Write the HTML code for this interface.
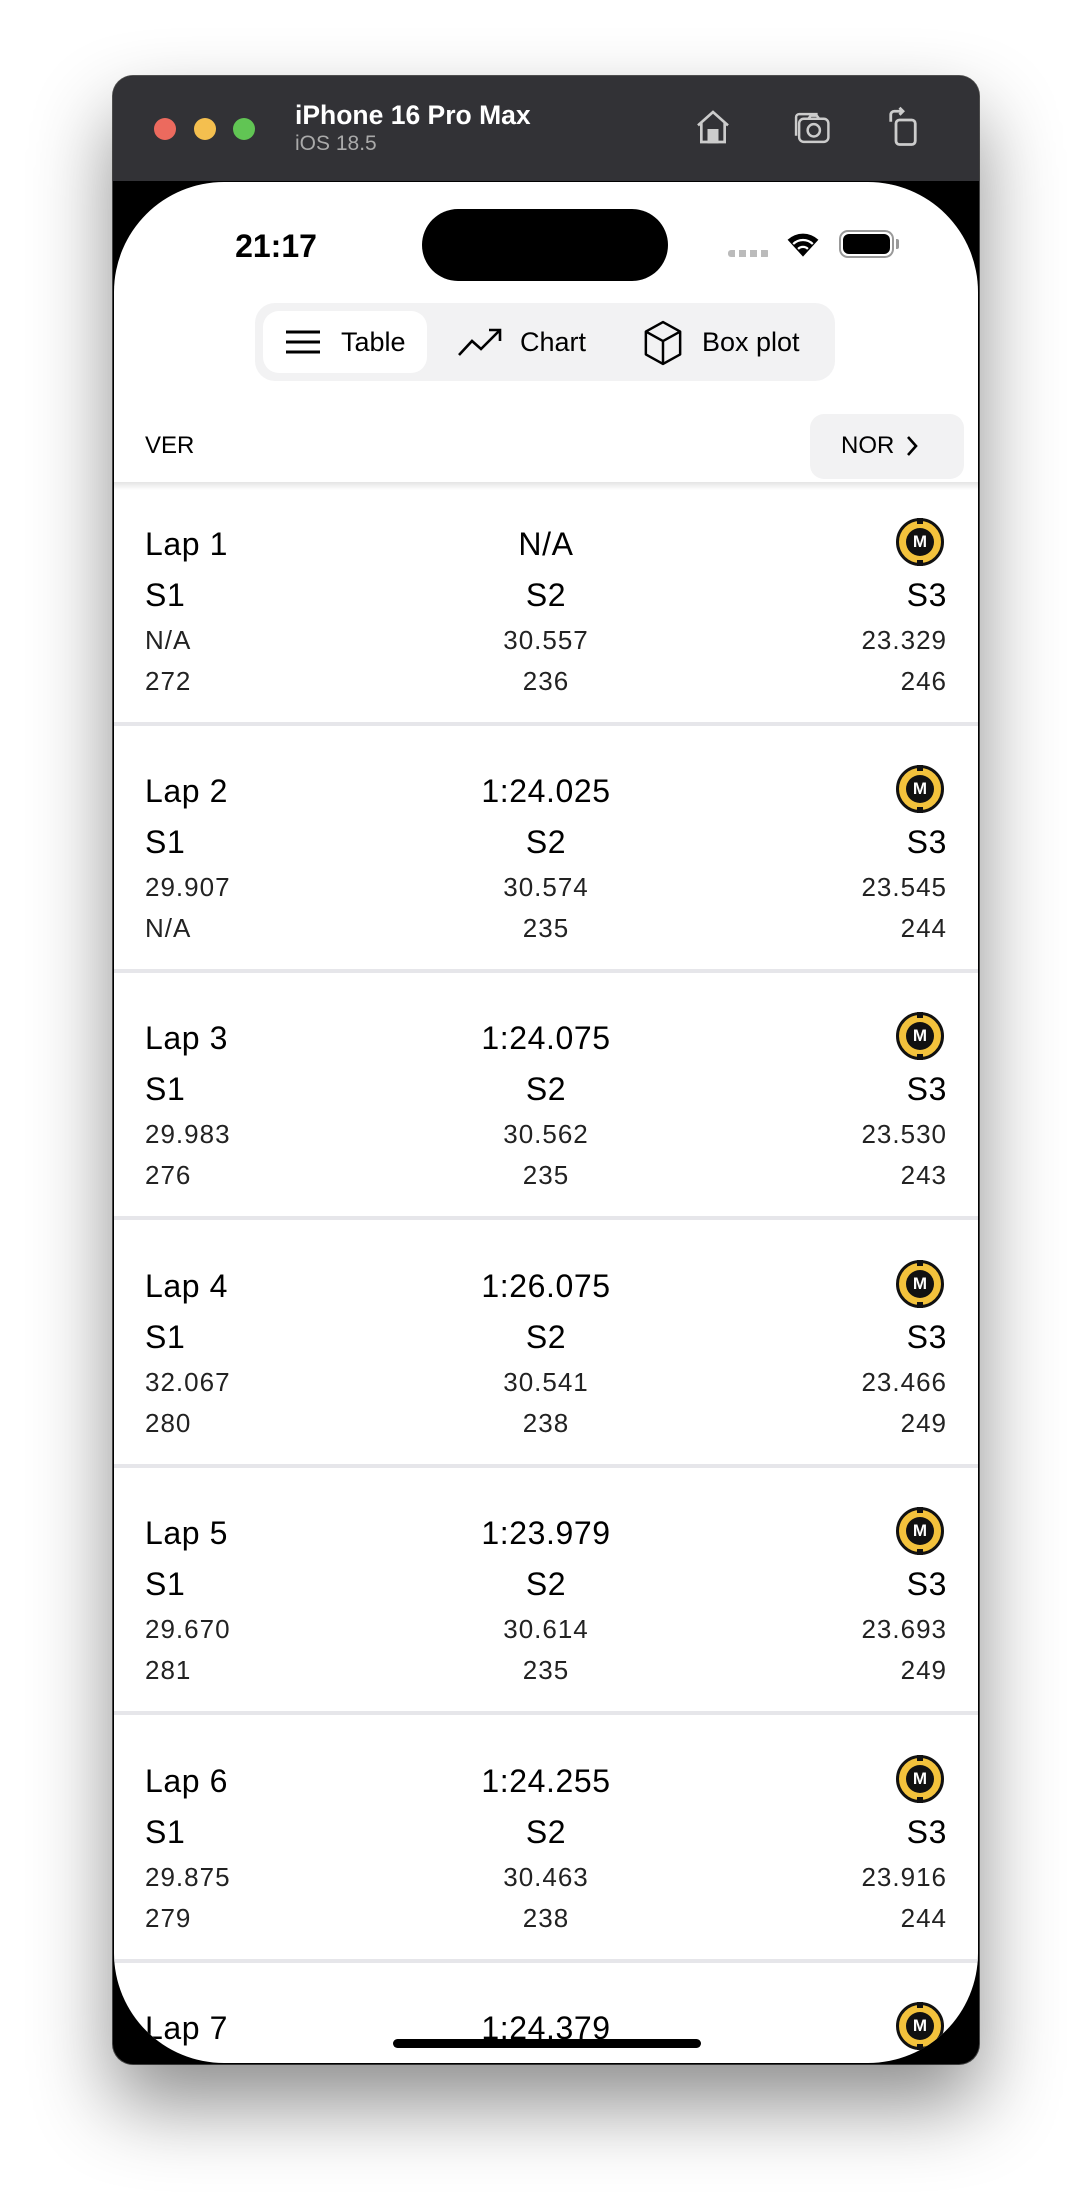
<!DOCTYPE html>
<html><head><meta charset="utf-8"><style>
*{margin:0;padding:0;box-sizing:border-box}
body{width:1088px;height:2206px;background:#fff;position:relative;overflow:hidden;font-family:"Liberation Sans",sans-serif}
#win{position:absolute;left:113px;top:76px;width:866px;height:1988px;border-radius:20px;background:#000;box-shadow:0 40px 80px rgba(0,0,0,0.45),0 0 0 1px #555;overflow:hidden}
#bar{position:absolute;left:0;top:0;width:866px;height:105px;background:#323236}
.tl{position:absolute;top:42px;width:22px;height:22px;border-radius:50%}
#scr{position:absolute;left:1px;top:106px;width:864px;height:1881px;border-radius:110px;background:#fff;overflow:hidden}
.a{position:absolute;white-space:nowrap;line-height:40px;height:40px}
.l{left:31px}.c{left:0;width:864px;text-align:center}.r{right:31px;text-align:right}
.big{font-size:32px;color:#000;letter-spacing:0.6px}
.sm{font-size:26px;color:#222;letter-spacing:1px}
.sep{position:absolute;left:0;width:864px;height:4px;background:#e6e6ea}
.m{position:absolute;left:782px;width:48px;height:48px;border-radius:50%;background:#f3c23c;border:3px solid #111}
.m:before{content:"";position:absolute;left:7px;top:7px;width:28px;height:28px;border-radius:50%;background:#111}
.m span{position:absolute;left:0;top:0;width:42px;height:42px;line-height:42px;text-align:center;color:#fff;font-weight:bold;font-size:17px}
.m i{position:absolute;left:18px;width:6px;height:6px;background:#111}
.seg{position:absolute;top:19px;font-size:27px;line-height:40px}
</style></head><body>
<div id="win">
 <div id="bar">
  <div class="tl" style="left:41px;background:#ec6a5e"></div>
  <div class="tl" style="left:81px;background:#f4bf4f"></div>
  <div class="tl" style="left:120px;background:#61c554"></div>
  <div style="position:absolute;left:182px;top:24px;color:#fff;font-weight:bold;font-size:26.5px">iPhone 16 Pro Max</div>
  <div style="position:absolute;left:182px;top:56px;color:#aaa;font-size:21px">iOS 18.5</div>
  <svg style="position:absolute;left:580px;top:31px" width="40" height="40" viewBox="0 0 24 24" fill="none" stroke="#ccc" stroke-width="1.6"><path d="M3 11 12 3l9 8M5 9v12h14V9"/><rect x="9.5" y="14" width="5" height="7" fill="#ccc"/></svg>
  <svg style="position:absolute;left:680px;top:33px" width="40" height="38" viewBox="0 0 26 24" fill="none" stroke="#ccc" stroke-width="1.6"><rect x="4" y="6" width="19" height="15" rx="3"/><path d="M2 17V5a2 2 0 0 1 2-2h12"/><circle cx="13.5" cy="13.5" r="4"/><path d="M10 6l1.5-2h4L17 6"/></svg>
  <svg style="position:absolute;left:772px;top:30px" width="36" height="42" viewBox="0 0 20 24" fill="none" stroke="#ccc" stroke-width="1.6"><rect x="6" y="8" width="11" height="14" rx="2"/><path d="M3 9V5a2 2 0 0 1 2-2h5M8 1l2 2-2 2"/></svg>
 </div>
 <div id="scr">
  <div style="position:absolute;left:112px;top:44px;width:100px;text-align:center;font-size:32px;font-weight:bold;line-height:40px">21:17</div>
  <div style="position:absolute;left:308px;top:27px;width:246px;height:72px;border-radius:36px;background:#000"></div>
  <div style="position:absolute;left:614px;top:68px;width:42px;height:7px;background:repeating-linear-gradient(90deg,#bbb 0 7px,transparent 7px 11px);border-radius:3px"></div>
  <svg style="position:absolute;left:672px;top:48px" width="34" height="28" viewBox="0 0 24 20"><path d="M12 19 1 7a16 16 0 0 1 22 0z" fill="#000"/><path d="M5 10a10 10 0 0 1 14 0M8.5 13.5a5 5 0 0 1 7 0" stroke="#fff" stroke-width="1.6" fill="none"/></svg>
  <div style="position:absolute;left:725px;top:48px;width:55px;height:28px;border:2.5px solid #999;border-radius:9px"><div style="position:absolute;left:2px;top:2px;right:2px;bottom:2px;background:#000;border-radius:6px"></div></div>
  <div style="position:absolute;left:782px;top:57px;width:3px;height:10px;background:#999;border-radius:0 2px 2px 0"></div>

  <div style="position:absolute;left:141px;top:121px;width:580px;height:78px;border-radius:20px;background:#f2f2f3">
   <div style="position:absolute;left:8px;top:8px;width:164px;height:62px;border-radius:16px;background:#fff"></div>
   <svg style="position:absolute;left:30px;top:26px" width="36" height="26" viewBox="0 0 36 26" stroke="#000" stroke-width="3"><path d="M1 3h34M1 13h34M1 23h34"/></svg>
   <div class="seg" style="left:86px">Table</div>
   <svg style="position:absolute;left:202px;top:24px" width="46" height="30" viewBox="0 0 46 30" fill="none" stroke="#000" stroke-width="2.6"><path d="M2 28l13-14 9 8 19-19M32 3h11v11"/></svg>
   <div class="seg" style="left:265px">Chart</div>
   <svg style="position:absolute;left:388px;top:17px" width="40" height="46" viewBox="0 0 42 48" fill="none" stroke="#000" stroke-width="2.6" stroke-linejoin="round"><path d="M21 2 39 12v24L21 46 3 36V12zM3 12l18 10 18-10M21 22v24"/></svg>
   <div class="seg" style="left:447px">Box plot</div>
  </div>

  <div class="a" style="left:31px;top:244px;font-size:24px">VER</div>
  <div style="position:absolute;left:696px;top:232px;width:154px;height:65px;border-radius:14px;background:#f2f2f3"></div>
  <div class="a" style="left:727px;top:244px;font-size:24px">NOR</div>
  <svg style="position:absolute;left:791px;top:253px" width="14" height="22" viewBox="0 0 14 22" fill="none" stroke="#000" stroke-width="2.6"><path d="M3 2l8 9-8 9"/></svg>
  <div style="position:absolute;left:0;top:300px;width:864px;height:8px;background:linear-gradient(#e4e4e4,#fff)"></div>

  <div class="sep" style="top:540px"></div><div class="sep" style="top:787px"></div><div class="sep" style="top:1034px"></div><div class="sep" style="top:1282px"></div><div class="sep" style="top:1529px"></div><div class="sep" style="top:1777px"></div>

  <div class="a big l" style="top:342px">Lap 1</div><div class="a big c" style="top:342px">N/A</div><div class="m" style="top:336px"><i style="top:-3px"></i><i style="bottom:-3px"></i><span>M</span></div>
  <div class="a big l" style="top:393px">S1</div><div class="a big c" style="top:393px">S2</div><div class="a big r" style="top:393px">S3</div>
  <div class="a sm l" style="top:438px">N/A</div><div class="a sm c" style="top:438px">30.557</div><div class="a sm r" style="top:438px">23.329</div>
  <div class="a sm l" style="top:479px">272</div><div class="a sm c" style="top:479px">236</div><div class="a sm r" style="top:479px">246</div>

  <div class="a big l" style="top:589px">Lap 2</div><div class="a big c" style="top:589px">1:24.025</div><div class="m" style="top:583px"><i style="top:-3px"></i><i style="bottom:-3px"></i><span>M</span></div>
  <div class="a big l" style="top:640px">S1</div><div class="a big c" style="top:640px">S2</div><div class="a big r" style="top:640px">S3</div>
  <div class="a sm l" style="top:685px">29.907</div><div class="a sm c" style="top:685px">30.574</div><div class="a sm r" style="top:685px">23.545</div>
  <div class="a sm l" style="top:726px">N/A</div><div class="a sm c" style="top:726px">235</div><div class="a sm r" style="top:726px">244</div>

  <div class="a big l" style="top:836px">Lap 3</div><div class="a big c" style="top:836px">1:24.075</div><div class="m" style="top:830px"><i style="top:-3px"></i><i style="bottom:-3px"></i><span>M</span></div>
  <div class="a big l" style="top:887px">S1</div><div class="a big c" style="top:887px">S2</div><div class="a big r" style="top:887px">S3</div>
  <div class="a sm l" style="top:932px">29.983</div><div class="a sm c" style="top:932px">30.562</div><div class="a sm r" style="top:932px">23.530</div>
  <div class="a sm l" style="top:973px">276</div><div class="a sm c" style="top:973px">235</div><div class="a sm r" style="top:973px">243</div>

  <div class="a big l" style="top:1084px">Lap 4</div><div class="a big c" style="top:1084px">1:26.075</div><div class="m" style="top:1078px"><i style="top:-3px"></i><i style="bottom:-3px"></i><span>M</span></div>
  <div class="a big l" style="top:1135px">S1</div><div class="a big c" style="top:1135px">S2</div><div class="a big r" style="top:1135px">S3</div>
  <div class="a sm l" style="top:1180px">32.067</div><div class="a sm c" style="top:1180px">30.541</div><div class="a sm r" style="top:1180px">23.466</div>
  <div class="a sm l" style="top:1221px">280</div><div class="a sm c" style="top:1221px">238</div><div class="a sm r" style="top:1221px">249</div>

  <div class="a big l" style="top:1331px">Lap 5</div><div class="a big c" style="top:1331px">1:23.979</div><div class="m" style="top:1325px"><i style="top:-3px"></i><i style="bottom:-3px"></i><span>M</span></div>
  <div class="a big l" style="top:1382px">S1</div><div class="a big c" style="top:1382px">S2</div><div class="a big r" style="top:1382px">S3</div>
  <div class="a sm l" style="top:1427px">29.670</div><div class="a sm c" style="top:1427px">30.614</div><div class="a sm r" style="top:1427px">23.693</div>
  <div class="a sm l" style="top:1468px">281</div><div class="a sm c" style="top:1468px">235</div><div class="a sm r" style="top:1468px">249</div>

  <div class="a big l" style="top:1579px">Lap 6</div><div class="a big c" style="top:1579px">1:24.255</div><div class="m" style="top:1573px"><i style="top:-3px"></i><i style="bottom:-3px"></i><span>M</span></div>
  <div class="a big l" style="top:1630px">S1</div><div class="a big c" style="top:1630px">S2</div><div class="a big r" style="top:1630px">S3</div>
  <div class="a sm l" style="top:1675px">29.875</div><div class="a sm c" style="top:1675px">30.463</div><div class="a sm r" style="top:1675px">23.916</div>
  <div class="a sm l" style="top:1716px">279</div><div class="a sm c" style="top:1716px">238</div><div class="a sm r" style="top:1716px">244</div>

  <div class="a big l" style="top:1826px">Lap 7</div><div class="a big c" style="top:1826px">1:24.379</div><div class="m" style="top:1820px"><i style="top:-3px"></i><i style="bottom:-3px"></i><span>M</span></div>

  <div style="position:absolute;left:279px;top:1857px;width:308px;height:9px;border-radius:5px;background:#000"></div>
 </div>
</div>
</body></html>
